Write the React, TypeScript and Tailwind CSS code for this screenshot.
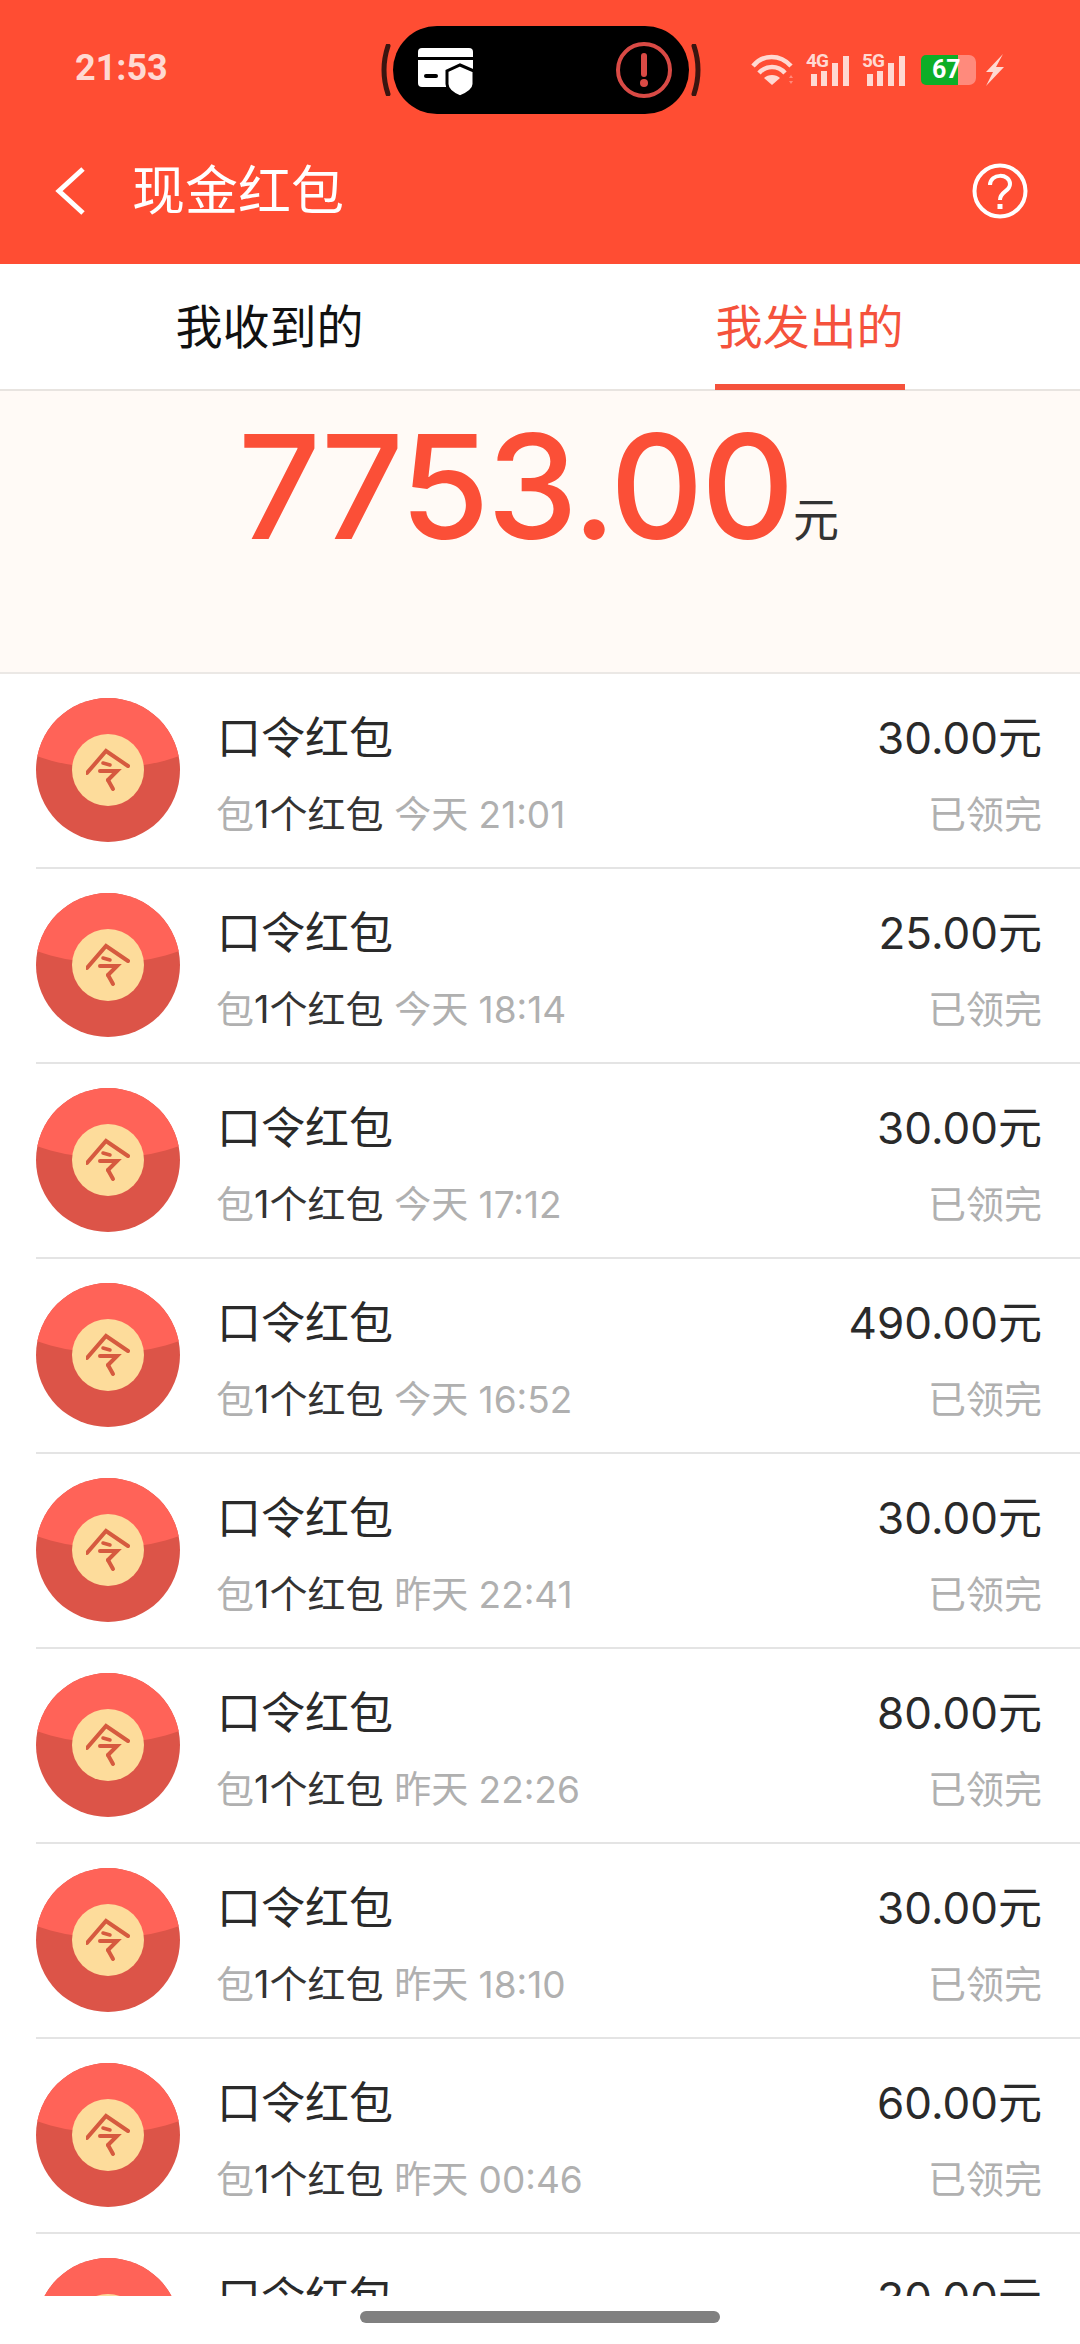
const rows = [
  { time: "今天 21:01", amount: "30.00" },
  { time: "今天 18:14", amount: "25.00" },
  { time: "今天 17:12", amount: "30.00" },
  { time: "今天 16:52", amount: "490.00" },
  { time: "昨天 22:41", amount: "30.00" },
  { time: "昨天 22:26", amount: "80.00" },
  { time: "昨天 18:10", amount: "30.00" },
  { time: "昨天 00:46", amount: "60.00" },
  { time: "昨天 00:20", amount: "30.00" },
];

function Signal({ label }: { label: string }) {
  return (
    <div className="relative w-[44px] h-[32px]">
      <span className="absolute left-0 top-[-3px] font-['Roboto',sans-serif] text-[19px] font-bold leading-[19px] tracking-[-1px] text-[#ffd9d2]">
        {label}
      </span>
      <span className="absolute left-[5px] bottom-0 w-[6px] h-[12px] bg-[#ffd9d2]" />
      <span className="absolute left-[15px] bottom-0 w-[6px] h-[15px] bg-[#ffd9d2]" />
      <span className="absolute left-[26px] bottom-0 w-[6px] h-[23px] bg-[#ffd9d2]" />
      <span className="absolute left-[37px] bottom-0 w-[6px] h-[30px] bg-[#ffd9d2]" />
    </div>
  );
}

function StatusBar() {
  return (
    <div className="h-[136px] flex items-start relative">
      <span className="ml-[75px] mt-[48px] font-['Roboto',sans-serif] text-[36px] leading-[40px] font-bold text-[#ffd9d2]">
        21:53
      </span>
      {/* island */}
      <div className="absolute left-[377px] top-[26px] flex items-center">
        <svg width="16" height="52" viewBox="0 0 16 52">
          <path d="M11 2 Q3 26 11 50" stroke="#3a1510" strokeWidth="5" strokeLinecap="round" fill="none" />
        </svg>
        <div className="w-[296px] h-[88px] rounded-full bg-black relative">
          <svg width="58" height="50" viewBox="0 0 58 50" className="absolute left-[25px] top-[22px]">
            <path d="M4 0H51a4 4 0 0 1 4 4V9H0V4a4 4 0 0 1 4-4Z" fill="#fff" />
            <path d="M0 12H55V35a4 4 0 0 1-4 4H4a4 4 0 0 1-4-4Z" fill="#fff" />
            <rect x="6" y="26" width="14" height="4" rx="2" fill="#000" />
            <path d="M42 17L56 23V36C56 42 49 46 42 49C35 46 29 42 29 36V23Z" fill="#fff" stroke="#000" strokeWidth="3" />
          </svg>
          <svg width="58" height="58" viewBox="0 0 58 58" className="absolute left-[222px] top-[15px]">
            <circle cx="29" cy="29" r="26" stroke="#d94a45" strokeWidth="4" fill="none" />
            <path d="M29 15V33" stroke="#d94a45" strokeWidth="6" strokeLinecap="round" />
            <circle cx="29" cy="42" r="4" fill="#d94a45" />
          </svg>
        </div>
        <svg width="16" height="52" viewBox="0 0 16 52">
          <path d="M5 2 Q13 26 5 50" stroke="#3a1510" strokeWidth="5" strokeLinecap="round" fill="none" />
        </svg>
      </div>
      {/* right side indicators */}
      <div className="absolute left-[751px] top-[54px] flex items-center">
        <svg width="46" height="32" viewBox="0 0 46 32" fill="none" stroke="#ffd9d2" strokeWidth="4.500">
          <path d="M2 12C12 0 29 0 40 12" />
          <path d="M8 19C15 11 27 11 34 19" />
          <path d="M21 31L13 24C17 20 25 20 29 24Z" fill="#ffd9d2" stroke="none" />
          <path d="M38 24L40 21L42 24Z M38 27L40 30L42 27Z" fill="#ff8a7c" stroke="none" />
        </svg>
        <div className="ml-[9px]"><Signal label="4G" /></div>
        <div className="ml-[12px]"><Signal label="5G" /></div>
        <div className="ml-[15px] w-[55px] h-[30px] flex rounded-[5px] overflow-hidden relative">
          <div className="w-[37px] bg-[#0dae27]" />
          <div className="w-[18px] bg-[#ff8a7c] rounded-r-[7px]" />
          <span className="absolute left-[11px] top-0 font-['Roboto',sans-serif] text-[25px] leading-[30px] font-bold text-white">
            67
          </span>
        </div>
        <svg width="20" height="32" viewBox="0 0 20 32" className="ml-[9px]">
          <path d="M18 0L1 18H8L1 32L19 13H11Z" fill="#ffd9d2" />
        </svg>
      </div>
    </div>
  );
}

function Packet() {
  return (
    <div className="w-[144px] h-[144px] mt-[-2px] rounded-full overflow-hidden relative shrink-0 bg-[#dc5448]">
      <div className="absolute left-[-78px] top-[-130px] w-[300px] h-[200px] rounded-[50%] bg-[#ff6358]" />
      <div className="absolute left-[36px] top-[36px] w-[72px] h-[72px] rounded-full bg-[#fddc9b] flex items-center justify-center">
        <svg width="44" height="44" viewBox="0 0 44 44" fill="none" stroke="#d65a3f" strokeWidth="4" strokeLinecap="round">
          <path d="M1 25L20 3L42 18" />
          <path d="M17 15L24 17" strokeWidth="3.500" />
          <path d="M14 23H31L22 32" />
          <path d="M22 32L27 41" />
        </svg>
      </div>
    </div>
  );
}

export default function App() {
  return (
    <div className="w-[1080px] h-[2344px] bg-white overflow-hidden relative font-['Inter','Noto_Sans_CJK_SC',sans-serif]">
      <div className="h-[264px] bg-[#ff4d33]">
        <StatusBar />
        <div className="h-[110px] flex items-center pl-[55px] pr-[52px] text-white">
          <svg width="30" height="48" viewBox="0 0 30 48" fill="none" stroke="#fff" strokeWidth="5">
            <path d="M28 2L4 24L28 46" />
          </svg>
          <span className="ml-[47px] text-[53px] leading-[70px]">现金红包</span>
          <svg width="56" height="56" viewBox="0 0 56 56" fill="none" stroke="#fff" className="ml-auto">
            <circle cx="28" cy="28" r="25.500" strokeWidth="4" />
            <path d="M18 22C18 10 38 10 38 21C38 29 28 28 28 37" strokeWidth="4" />
            <rect x="25.500" y="41" width="5" height="5" fill="#fff" stroke="none" />
          </svg>
        </div>
      </div>

      <div className="h-[127px] flex border-b-2 border-[#e8e4e0]">
        <div className="w-1/2 flex items-center justify-center text-[47px] text-[#111]">
          <span className="ml-[-1px] mt-[1px]">我收到的</span>
        </div>
        <div className="w-1/2 flex items-center justify-center">
          <div className="h-full flex items-center relative text-[47px] text-[#f5523c] ml-[-1px]">
            <span className="mt-[1px]">我发出的</span>
            <span className="absolute left-[-1px] right-[-1px] bottom-[-1px] h-[6px] bg-[#f5523c]" />
          </div>
        </div>
      </div>

      <div className="h-[283px] bg-[#fffaf6] flex items-start justify-center border-b-2 border-[#ebe8e5]">
        <span className="mt-[1px] ml-[-3px] text-[145px] leading-[190px] font-medium tracking-[-2.500px] text-[#fb4f37]">
          7753.00
        </span>
        <span className="mt-[98px] ml-[1px] text-[46px] leading-[60px] text-[#333]">元</span>
      </div>

      <div className="h-[1622px] overflow-hidden">
        {rows.map((row, i) => (
          <div key={i} className="ml-[36px] h-[195px] flex items-center border-b-2 border-[#e4e4e4] pr-[38px]">
            <Packet />
            <div className="ml-[37px] flex-1 pt-[6px]">
              <div className="text-[44px] leading-[60px] text-[#2a2a2a]">口令红包</div>
              <div className="mt-[21px] ml-[-1px] text-[38px] leading-[50px] text-[#b0b0b0] whitespace-nowrap">
                包<span className="text-[#333]">1个红包</span> <span className="text-[37px]">{row.time}</span>
              </div>
            </div>
            <div className="text-right pt-[6px]">
              <div className="text-[44px] leading-[60px] text-[#2a2a2a]">{row.amount}元</div>
              <div className="mt-[21px] text-[38px] leading-[50px] text-[#b0b0b0]">已领完</div>
            </div>
          </div>
        ))}
      </div>

      <div className="absolute left-[360px] top-[2311px] w-[360px] h-[12px] rounded-full bg-[#808080]" />
    </div>
  );
}
